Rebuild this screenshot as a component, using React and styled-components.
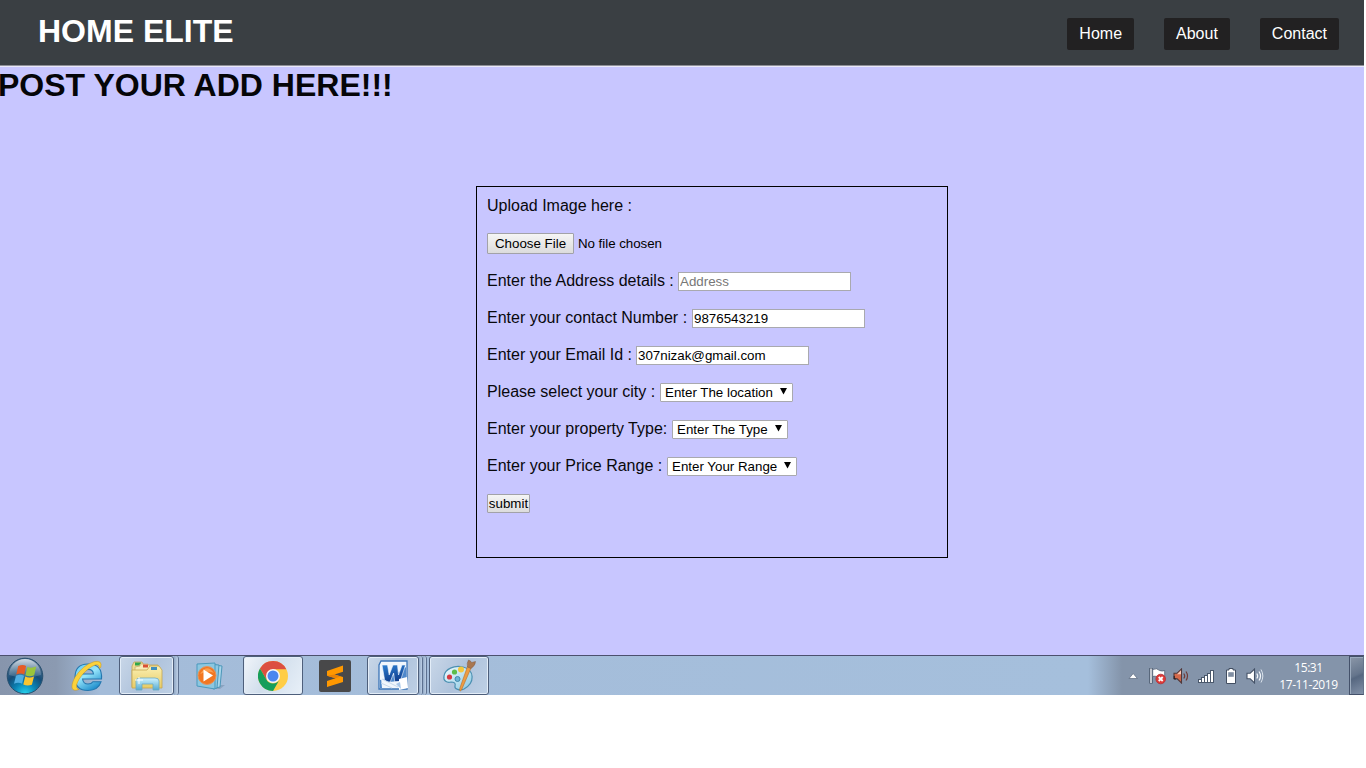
import React from "react";
import styled, { createGlobalStyle } from "styled-components";

const GlobalStyle = createGlobalStyle`
  * { box-sizing: border-box; }
  body { margin: 0; background: #fff; font-family: "Liberation Sans", Arial, sans-serif; overflow: hidden; }
  svg { display: block; flex: none; }
`;

const Screen = styled.div`
  width: 1364px;
  height: 695px;
  display: flex;
  flex-direction: column;
  background: #c8c6ff;
`;

const Header = styled.header`
  flex: none;
  height: 67px;
  display: flex;
  align-items: flex-start;
  justify-content: space-between;
  padding: 0 25px 0 38px;
  background: #3a3f43;
  border-bottom: 1px solid #e9e8f8;
  box-shadow: inset 0 -1px #8e8f98;
`;

const Brand = styled.h1`
  margin: 13px 0 0;
  color: #fff;
  font-size: 32px;
  line-height: 36px;
`;

const Nav = styled.nav`
  display: flex;
  gap: 30px;
  padding-top: 18px;
`;

const NavLink = styled.a`
  height: 32px;
  padding: 0 12px;
  border-radius: 2px;
  background: #222122;
  color: #fff;
  font-size: 16px;
  line-height: 31px;
`;

const Main = styled.main`
  flex: 1;
  min-height: 0;
`;

const PageTitle = styled.h1`
  margin: 0 0 0 -2px;
  font-size: 32px;
  line-height: 36px;
  color: #050508;
`;

const Form = styled.form`
  width: 472px;
  height: 372px;
  margin: 83px 0 0 476px;
  padding: 0 10px;
  border: 1px solid #000;
`;

const Row = styled.div`
  height: 37px;
  display: flex;
  align-items: center;
  gap: ${(p) => p.$gap || "4px"};
`;

const FileRow = styled(Row)`
  height: 38px;
  padding-bottom: 1px;
`;

const Label = styled.label`
  font-size: 16px;
  line-height: 18px;
  color: #08080c;
  white-space: pre;
  width: ${(p) => p.$width || "auto"};
`;

const TextInput = styled.input`
  width: 173px;
  height: 19px;
  margin: 2px 0 0;
  padding: 0 1px;
  border: 1px solid #a9a9ae;
  border-radius: 0;
  background: #fff;
  font: 13.333px "Liberation Sans", Arial, sans-serif;
  color: #000;
  outline: none;
  &::placeholder { color: #777; }
`;

const SelectWrap = styled.div`
  position: relative;
  width: ${(p) => p.$width};
  height: 19px;
  margin-top: 2px;
  svg { position: absolute; right: 6px; top: 5px; }
`;

const Select = styled.select`
  appearance: none;
  display: block;
  width: 100%;
  height: 19px;
  padding: 0 0 0 4px;
  border: 1px solid #a9a9ae;
  border-radius: 1px;
  background: #fff;
  color: #000;
  font: 13.333px "Liberation Sans", Arial, sans-serif;
`;

const Button = styled.button`
  width: ${(p) => p.$width};
  height: ${(p) => p.$height};
  margin: 2px 0 0;
  padding: 0;
  border: 1px solid #a2a2a8;
  border-radius: 1px;
  background: linear-gradient(#f5f5f5, #dcdcdc);
  color: #000;
  font: 13.333px "Liberation Sans", Arial, sans-serif;
  white-space: nowrap;
`;

const FileStatus = styled.span`
  margin-top: 2px;
  font-size: 13.333px;
  line-height: 15px;
  letter-spacing: -0.04px;
`;

const Taskbar = styled.footer`
  flex: none;
  height: 40px;
  display: flex;
  border-top: 1px solid #4c506e;
  background: linear-gradient(90deg, #8795ac 0, #8b9ab1 56px, #a4bcd9 100px, #a5bfdc 1088px, #8494aa 1122px, #8494aa 100%);
`;

const TaskItem = styled.div`
  width: ${(p) => p.$width};
  margin-left: ${(p) => p.$left || 0};
  height: 39px;
  flex: none;
  display: flex;
  align-items: center;
  justify-content: center;
`;

const OpenApp = styled(TaskItem)`
  border: 1px solid #4e5f7b;
  border-radius: 3px;
  box-shadow: inset 0 0 0 1px #e3edf8;
  background: ${(p) => (p.$active ? "linear-gradient(120deg,#f1f5fa,#d1deec 45%,#e8f0f8)" : "linear-gradient(120deg,#c9d7e8,#afc3dc 50%,#bed0e5)")};
`;

const StackEdge = styled.div`
  width: ${(p) => p.$width || "4px"};
  height: 39px;
  border-right: 1px solid #5d7190;
  border-radius: 0 3px 3px 0;
  background: linear-gradient(90deg, #91a8c5, #bed0e6);
`;

const Tray = styled.div`
  margin-left: auto;
  display: flex;
  align-items: center;
`;

const TrayIcon = styled.svg`
  margin-right: ${(p) => p.$gap};
`;

const Clock = styled.div`
  width: 73px;
  margin-right: 4px;
  text-align: center;
  color: #fff;
  font: 12px/17px "Open Sans", "Noto Sans", sans-serif;
  letter-spacing: -0.42px;
`;

const ShowDesktop = styled.div`
  width: 15px;
  height: 39px;
  border: 1px solid #44516a;
  border-right-color: #65738a;
  box-shadow: inset 1px 1px #9cabbe;
  background: linear-gradient(155deg, #8b97a8, #65758c 48%, #566780 54%, #8291a8);
`;

function Dropdown({ id, text, width }) {
  return (
    <SelectWrap $width={width}>
      <Select id={id}><option>{text}</option></Select>
      <svg width="7" height="7"><path d="M0 0h7L3.5 6.5z" fill="#000" /></svg>
    </SelectWrap>
  );
}

function StartOrb() {
  return (
    <svg width="38" height="38" viewBox="0 0 38 38">
      <defs>
        <radialGradient id="orb" cx=".5" cy="1" r=".9">
          <stop offset="0" stopColor="#28d5ee" /><stop offset=".35" stopColor="#0a83b5" />
          <stop offset=".65" stopColor="#154d78" /><stop offset="1" stopColor="#526f8c" />
        </radialGradient>
        <linearGradient id="gloss" x2="0" y2="1"><stop stopColor="#e6eef4" stopOpacity=".85" /><stop offset="1" stopColor="#8ba7bd" stopOpacity=".25" /></linearGradient>
      </defs>
      <circle cx="19" cy="19" r="17.8" fill="url(#orb)" stroke="#28506f" />
      <path d="M3 18a16 16 0 0 1 32 0q-16 5-32 0z" fill="url(#gloss)" />
      <path d="M12.2 9.1q4.4-2 7.9-.2l-1.9 8.5q-3.8-1.6-7.9 0z" fill="#e65c25" />
      <path d="M21.4 9.8q4 1.8 8.8-.2l-2 8.7q-4.8 1.8-8.8-.1z" fill="#9ac53b" />
      <path d="M10 18.7q4.2-1.7 8 0l-1.9 8.1q-3.7-1.8-8.1-.1z" fill="#50afe3" />
      <path d="M19.2 19.4q4.1 1.9 8.8.1l-2.1 8.2q-4.6 1.7-8.6-.3z" fill="#fbc52f" />
    </svg>
  );
}

function ExplorerBrowserIcon() {
  return (
    <svg width="34" height="34" viewBox="0 0 34 34">
      <defs><linearGradient id="ie" x2=".6" y2="1"><stop stopColor="#64c9f1" /><stop offset=".5" stopColor="#96e5fb" /><stop offset="1" stopColor="#2491ce" /></linearGradient></defs>
      <path d="M31.5 20H12.6q.5 5 5.4 5 3.5 0 4.9-2.3h8.2Q28.3 31.5 18 31.5 5 31.5 5 18.5 5 5 18 5q14.7 0 13.5 15zM12.7 15h10.8q-.7-4.6-5.2-4.6-4.6 0-5.6 4.6z" fill="url(#ie)" stroke="#2577af" strokeWidth="1.1" />
      <path d="M30.8 8.3Q32.7.9 24 2.7 12.5 6.2 5 18.2C.3 26.7.6 34 9.2 30.3 4.6 29.5 6.6 23.6 10.6 18 17 9.4 26 3.9 28.6 6.4q.9.7.4 3z" fill="#fbd23c" stroke="#c89219" strokeWidth=".5" />
    </svg>
  );
}

function FoldersIcon() {
  return (
    <svg width="34" height="31" viewBox="0 0 34 31">
      <defs><linearGradient id="fold" x2="0" y2="1"><stop stopColor="#fbf0b3" /><stop offset="1" stopColor="#e7cb65" /></linearGradient>
      <linearGradient id="stand" x2="0" y2="1"><stop stopColor="#d0f3ff" /><stop offset="1" stopColor="#54abd1" /></linearGradient></defs>
      <path d="M2 6l2-4h8l2 3h14l1 3v19H2z" fill="#efdb91" stroke="#bda25b" strokeWidth=".8" />
      <path d="M5 2.5h6v3H5z" fill="#2fa64a" />
      <path d="M5 7l5-1V4h8l2 3h10v20H5z" fill="#f7ecb7" stroke="#c6b16f" strokeWidth=".8" />
      <path d="M13 4.5h5v3h-5z" fill="#d85135" />
      <path d="M2 10h15l3-4h9l3 4v18H2z" fill="url(#fold)" stroke="#c5a64e" strokeWidth=".8" />
      <path d="M21 7h6v3h-6z" fill="#408fbc" />
      <path d="M6 30V21q0-3 4-3h15q4 0 4 3v9h-6v-6H12v6z" fill="url(#stand)" stroke="#6ca9c2" strokeWidth=".8" />
      <path d="M9 17v7m-4-4h8" stroke="#fff" opacity=".9" />
    </svg>
  );
}

function MediaPlayerIcon() {
  return (
    <svg width="30" height="28" viewBox="0 0 30 28">
      <path d="M22 23h7l-5 4h-5z" fill="#637d99" opacity=".4" />
      <path d="M19 3l7 1-2 21-5 1z" fill="#a8d6ea" stroke="#4c97b9" />
      <path d="M17 2.5l6 .5-2 23-4 1z" fill="#8ec8e2" stroke="#4c97b9" />
      <path d="M1 2l18-1v26L1 24z" fill="#8cc7e0" stroke="#4b99bd" />
      <circle cx="11" cy="13.5" r="9" fill="#f27722" stroke="#e5935b" />
      <path d="M4 12q7-11 14-1-6-3-14 1z" fill="#ffae61" opacity=".75" />
      <path d="M7.5 7.5l9.5 6-9.5 6z" fill="#fff" />
    </svg>
  );
}

function ChromeIcon() {
  return (
    <svg width="30" height="30" viewBox="0 0 30 30">
      <circle cx="15" cy="15" r="15" fill="#ffcd46" />
      <path d="M2 7.5A15 15 0 0 1 28.3 8.2H15L8.5 18.8z" fill="#dc4f41" />
      <path d="M2 7.5A15 15 0 0 0 15 30l6.5-11.2A7.5 7.5 0 0 1 8.5 18.8z" fill="#169e5b" />
      <circle cx="15" cy="15" r="7" fill="#f5f7fa" />
      <circle cx="15" cy="15" r="5.5" fill="#4b87ef" />
    </svg>
  );
}

function SublimeIcon() {
  return (
    <svg width="32" height="32" viewBox="0 0 32 32">
      <rect width="32" height="32" rx="2" fill="#484849" />
      <path d="M8 11L24 5.5v6.2l-8.5 2.8 8.5 2.6v4.9L8 27v-6l8.5-2.7L8 15.7z" fill="#ff9800" />
      <path d="M8 15.7l8.5 2.6 5-1.8-6-2z" fill="#e98205" />
    </svg>
  );
}

function WordIcon() {
  return (
    <svg width="31" height="31" viewBox="0 0 31 31">
      <defs><linearGradient id="wordBlue" x2=".3" y2="1"><stop stopColor="#2c7fd2" /><stop offset="1" stopColor="#113f8f" /></linearGradient></defs>
      <path d="M3 1h26v28H1V5z" fill="#f0f6fd" stroke="#3c75b8" strokeWidth="1.3" />
      <path d="M2 20q16-4 26-13v21H2z" fill="#4f88cb" />
      <path d="M4 5h5.5l1.7 10L15 5h4.5l1 10L24 5h3.5L22 22h-5.2l-1.2-9-3.4 9H7z" fill="url(#wordBlue)" stroke="#f4f9ff" strokeWidth=".6" />
      <path d="M3 18l7 4 12-1 1 7H4z" fill="#f1f6fc" />
      <path d="M3 23l11 5M4 19l16 8" stroke="#c7d9ed" />
      <path d="M21 19l8-2 1 11-9 2z" fill="#fff" />
      <path d="M22 22l-4 2 5 5" fill="#a8c6e8" />
    </svg>
  );
}

function PaintIcon() {
  return (
    <svg width="34" height="34" viewBox="0 0 34 34">
      <defs><linearGradient id="palette" x2="1" y2="1"><stop stopColor="#f2fbff" /><stop offset="1" stopColor="#88c8e2" /></linearGradient></defs>
      <path d="M2 17C3 10 12 6 21 8c12 3 12 16 1 22-4 2-10 0-9-3s-1-4-4-4c-4 1-8-1-7-6z" fill="url(#palette)" stroke="#4b90b1" strokeWidth="1.2" />
      <circle cx="7.5" cy="18" r="2.6" fill="#d63a42" /><circle cx="12.5" cy="13" r="2.6" fill="#5cbd49" />
      <circle cx="19" cy="10.5" r="3" fill="#f4c83d" /><circle cx="15.5" cy="20" r="2.5" fill="#6bb4d6" stroke="#4389aa" />
      <path d="M25.5 7.5l3.5 1.5-9.5 22q-2.4 2.6-1.6-2z" fill="#ed9c42" stroke="#b56e29" strokeWidth=".6" />
      <path d="M25.5 8q-1-4 1-7l2 1 1 1.5 4-1q0 4-4.5 7z" fill="#a97750" stroke="#815e48" strokeWidth=".5" />
    </svg>
  );
}

function SpeakerDrawing({ muted = false }) {
  return (
    <>
      <path d="M1 5.2h3.2L8.5 1v14l-4.3-4.2H1z" fill={muted ? "#d4694b" : "#fff"} stroke={muted ? "#51383a" : "#465368"} strokeWidth="1.1" />
      {muted && <path d="M4 6.3l4-4v4z" fill="#fac7b5" />}
      {muted && <path d="M1.2 8v3h2" stroke="#241a1d" fill="none" />}
      <path d="M10.8 5.5q1.8 2.5 0 5M13 3.5q3 4.5 0 9" fill="none" stroke={muted ? "#703b38" : "#f4f7fb"} strokeWidth="1.2" />
      {!muted && <path d="M15 1.5q3.7 6.5 0 13" fill="none" stroke="#dce4ed" />}
    </>
  );
}

function SystemTray() {
  return (
    <Tray>
      <TrayIcon $gap="11px" width="10" height="8"><path d="M1 6.5L5.2 1.5l4.2 5z" fill="#fff" stroke="#59677c" strokeWidth=".7" /></TrayIcon>
      <TrayIcon $gap="6px" width="18" height="18" viewBox="0 0 18 18">
        <path d="M2 1v15.5" stroke="#465368" strokeWidth="3.4" /><path d="M2 1.5v14.5" stroke="#fff" strokeWidth="1.4" />
        <path d="M3.7 2.5q4-2 7 1 2.5 1 5 0v7q-4 2-7.5-.5-2-1.4-4.5-.5z" fill="#fff" stroke="#526075" strokeWidth=".8" />
        <circle cx="11.7" cy="12" r="4.8" fill="#de3b38" stroke="#b52e35" strokeWidth=".8" /><path d="M9.7 10l4 4m0-4l-4 4" stroke="#fff" strokeWidth="1.8" />
      </TrayIcon>
      <TrayIcon $gap="8px" width="17" height="16"><SpeakerDrawing muted /></TrayIcon>
      <TrayIcon $gap="10px" width="17" height="16">
        {[2, 4, 6, 8, 11].map((h, i) => <rect key={`edge-${h}`} x={i * 3} y={13 - h} width="4" height={h + 2} fill="#49576b" />)}
        {[2, 4, 6, 8, 11].map((h, i) => <rect key={h} x={1 + i * 3} y={14 - h} width="2" height={h} fill="#fff" />)}
      </TrayIcon>
      <TrayIcon $gap="9px" width="12" height="16">
        <path d="M4 2V.5h4V2h2.5v13.5h-9V2z" fill="#fff" stroke="#424e61" />
        <path d="M3.2 4.2h5.6v4.6H3.2z" fill="#7f8da1" />
        <path d="M3.2 9.5h5.6v3.8H3.2z" fill="#fff" />
      </TrayIcon>
      <TrayIcon $gap="8px" width="18" height="16"><SpeakerDrawing /></TrayIcon>
      <Clock>15:31<br />17-11-2019</Clock>
      <ShowDesktop />
    </Tray>
  );
}

export default function App() {
  return (
    <>
      <GlobalStyle />
      <Screen>
        <Header>
          <Brand>HOME ELITE</Brand>
          <Nav><NavLink>Home</NavLink><NavLink>About</NavLink><NavLink>Contact</NavLink></Nav>
        </Header>
        <Main>
          <PageTitle>POST YOUR ADD HERE!!!</PageTitle>
          <Form>
            <Row><Label>Upload Image here :</Label></Row>
            <FileRow><Button type="button" $width="87px" $height="21px">Choose File</Button><FileStatus>No file chosen</FileStatus></FileRow>
            <Row $gap="0"><Label htmlFor="address" $width="191px">Enter the Address details :</Label><TextInput id="address" placeholder="Address" /></Row>
            <Row $gap="0"><Label htmlFor="phone" $width="205px">Enter your contact Number :</Label><TextInput id="phone" defaultValue="9876543219" /></Row>
            <Row $gap="0"><Label htmlFor="email" $width="149px">Enter your Email Id :</Label><TextInput id="email" defaultValue="307nizak@gmail.com" /></Row>
            <Row $gap="0"><Label htmlFor="city" $width="173px">Please select your city :</Label><Dropdown id="city" text="Enter The location" width="133px" /></Row>
            <Row $gap="0"><Label htmlFor="type" $width="185px">Enter your property Type:</Label><Dropdown id="type" text="Enter The Type" width="116px" /></Row>
            <Row $gap="0"><Label htmlFor="range" $width="180px">Enter your Price Range :</Label><Dropdown id="range" text="Enter Your Range" width="130px" /></Row>
            <Row><Button type="button" $width="43px" $height="19px">submit</Button></Row>
          </Form>
        </Main>
        <Taskbar>
          <TaskItem $width="38px" $left="6px"><StartOrb /></TaskItem>
          <TaskItem $width="34px" $left="26px"><ExplorerBrowserIcon /></TaskItem>
          <OpenApp $width="55px" $left="15px"><FoldersIcon /></OpenApp>
          <StackEdge $width="5px" />
          <TaskItem $width="30px" $left="17px"><MediaPlayerIcon /></TaskItem>
          <OpenApp $width="60px" $left="17px" $active><ChromeIcon /></OpenApp>
          <TaskItem $width="32px" $left="16px"><SublimeIcon /></TaskItem>
          <OpenApp $width="52px" $left="16px"><WordIcon /></OpenApp>
          <StackEdge /><StackEdge />
          <OpenApp $width="60px" $left="2px"><PaintIcon /></OpenApp>
          <SystemTray />
        </Taskbar>
      </Screen>
    </>
  );
}
